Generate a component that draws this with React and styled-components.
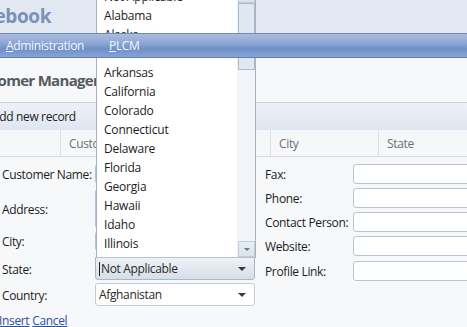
import React from 'react';
import styled, { createGlobalStyle } from 'styled-components';

const Global = createGlobalStyle`
  html, body { margin: 0; padding: 0; }
  body {
    background: #f7f8fa;
    font-family: "Open Sans", "Noto Sans", sans-serif;
    font-size: 12px;
    letter-spacing: -0.35px;
    color: #1c1c1c;
    overflow: hidden;
  }
`;

const Viewport = styled.div`
  width: 467px;
  height: 327px;
  overflow: hidden;
  background: #f7f8fa;
`;

const Header = styled.header`
  height: 33px;
  background: #e1e8f2;
  display: flex;
  align-items: center;
`;

const Brand = styled.h1`
  margin: 0;
  font-size: 19px;
  font-weight: 700;
  letter-spacing: -0.4px;
  color: #7b92b8;
  white-space: nowrap;
  line-height: 1;
  text-indent: -36px;
  padding-bottom: 1px;
`;

const MenuBar = styled.nav`
  position: relative;
  z-index: 10;
  height: 25px;
  box-sizing: border-box;
  border-top: 1px solid #7289b2;
  border-bottom: 1px solid #6581b2;
  background: linear-gradient(#a9bcdf 0%, #93aad6 35%, #7190c6 65%, #86a4d8 100%);
  display: flex;
  align-items: center;
  gap: 25px;
  padding-left: 6px;
`;

const MenuItem = styled.span`
  color: #f3f6fc;
  font-size: 12px;
  u { text-decoration: underline; }
`;

const PageTitle = styled.h2`
  margin: 0;
  height: 44px;
  display: flex;
  align-items: center;
  font-size: 15px;
  font-weight: 700;
  letter-spacing: -0.7px;
  color: #555a60;
  white-space: nowrap;
  text-indent: -33px;
`;

const Toolbar = styled.div`
  height: 28px;
  box-sizing: border-box;
  border-top: 1px solid #c7d2e0;
  background: linear-gradient(#edf1f7, #dfe6f0);
  display: flex;
  align-items: center;
  white-space: nowrap;
  text-indent: -8px;
  color: #222;
`;

const HeaderRow = styled.div`
  height: 27px;
  box-sizing: border-box;
  background: #f6f7f9;
  border-bottom: 1px solid #d3d9e2;
  display: grid;
  grid-template-columns: 60px 210px 108px 1fr;
`;

const HeaderCell = styled.div`
  display: flex;
  align-items: center;
  padding-left: ${p => (p.$first ? 0 : 8)}px;
  border-left: ${p => (p.$first ? 'none' : '1px solid #dde2e9')};
  color: #6d6f73;
  white-space: nowrap;
  overflow: hidden;
`;

const Form = styled.div`
  display: grid;
  grid-template-columns: 265px 1fr;
  padding-top: 7px;
`;

const Column = styled.div`
  display: flex;
  flex-direction: column;
`;

const Field = styled.div`
  position: relative;
  display: grid;
  grid-template-columns: ${p => p.$label}px 160px;
  align-items: center;
  height: ${p => p.$h}px;
  margin-bottom: ${p => p.$gap}px;
  padding-left: ${p => p.$pad || 0}px;
`;

const Label = styled.label`
  white-space: nowrap;
  color: #1c1c1c;
  padding-top: 1px;
`;

const Input = styled.div`
  height: ${p => p.$h || 20}px;
  box-sizing: border-box;
  border: 1px solid #b7c4d3;
  border-radius: 3px;
  background: #fff;
  width: ${p => p.$w || 160}px;
`;

const Select = styled.div`
  position: relative;
  height: ${p => p.$h}px;
  box-sizing: border-box;
  width: 160px;
  border: 1px solid ${p => (p.$active ? '#a9b7c8' : '#c0ccda')};
  border-radius: ${p => (p.$active ? '0 0 3px 3px' : '3px')};
  background: ${p => (p.$active ? 'linear-gradient(#eef2f6, #d6dee8)' : '#fff')};
  display: flex;
  align-items: center;
  padding-left: 3px;
  color: #2a2a2a;
`;

const Caret = styled.span`
  display: inline-block;
  width: 1px;
  height: 14px;
  background: #222;
  margin-right: 1px;
`;

const Arrow = styled.span`
  position: absolute;
  right: 8px;
  top: 50%;
  margin-top: -2px;
  width: 0;
  height: 0;
  border-left: 4px solid transparent;
  border-right: 4px solid transparent;
  border-top: 4px solid #333a44;
`;

const ListBox = styled.div`
  position: absolute;
  left: 0;
  bottom: 100%;
  width: 160px;
  height: 272px;
  box-sizing: border-box;
  border: 1px solid #a6b2c1;
  border-bottom-color: #b9c3cf;
  background: #fff;
  display: flex;
  z-index: 5;
`;

const Items = styled.ul`
  list-style: none;
  margin: 0;
  padding: 0 0 0 7px;
  flex: 1;
  overflow: hidden;
`;

const Item = styled.li`
  height: 19px;
  line-height: 19px;
  white-space: nowrap;
  letter-spacing: -0.2px;
  color: #1c1c1c;
`;

const ScrollBar = styled.div`
  width: 17px;
  background: #f3f5f8;
  display: flex;
  flex-direction: column;
  border-left: 1px solid #eef1f5;
`;

const ScrollButton = styled.div`
  height: 16px;
  box-sizing: border-box;
  border: 1px solid #c2ccd8;
  background: linear-gradient(#e9eef4, #dce3ec);
  display: flex;
  align-items: center;
  justify-content: center;
  &::after {
    content: '';
    border-left: 3.5px solid transparent;
    border-right: 3.5px solid transparent;
    ${p => (p.$up ? 'border-bottom' : 'border-top')}: 3.5px solid #6c7888;
  }
`;

const Thumb = styled.div`
  height: 67px;
  box-sizing: border-box;
  border: 1px solid #adbacb;
  background: #dfe7f1;
`;

const Spacer = styled.div`
  flex: 1;
`;

const Links = styled.div`
  margin-top: 6px;
  display: flex;
  gap: 4px;
  text-indent: -1px;
`;

const Link = styled.a`
  color: #2c4f9e;
  text-decoration: underline;
  cursor: pointer;
`;

const states = [
  'Not Applicable', 'Alabama', 'Alaska', 'Arizona', 'Arkansas', 'California',
  'Colorado', 'Connecticut', 'Delaware', 'Florida', 'Georgia', 'Hawaii',
  'Idaho', 'Illinois', 'Indiana', 'Iowa',
];

export default function App() {
  return (
    <Viewport>
      <Global />
      <Header>
        <Brand>Facebook</Brand>
      </Header>
      <MenuBar>
        <MenuItem><u>A</u>dministration</MenuItem>
        <MenuItem><u>P</u>LCM</MenuItem>
      </MenuBar>
      <PageTitle>Customer Management</PageTitle>
      <Toolbar>Add new record</Toolbar>
      <HeaderRow>
        <HeaderCell $first />
        <HeaderCell>Customer Name</HeaderCell>
        <HeaderCell>City</HeaderCell>
        <HeaderCell>State</HeaderCell>
      </HeaderRow>
      <Form>
        <Column>
          <Field $label={93} $h={20} $gap={5} $pad={2}>
            <Label>Customer Name:</Label>
            <Input />
          </Field>
          <Field $label={93} $h={40} $gap={2} $pad={2}>
            <Label>Address:</Label>
            <Input $h={40} />
          </Field>
          <Field $label={93} $h={20} $gap={6} $pad={2}>
            <Label>City:</Label>
            <Input />
          </Field>
          <Field $label={93} $h={23} $gap={3} $pad={2}>
            <Label>State:</Label>
            <Select $h={23} $active>
              <ListBox>
                <Items>
                  {states.map(s => <Item key={s}>{s}</Item>)}
                </Items>
                <ScrollBar>
                  <ScrollButton $up />
                  <Thumb />
                  <Spacer />
                  <ScrollButton />
                </ScrollBar>
              </ListBox>
              <Caret />Not Applicable
              <Arrow />
            </Select>
          </Field>
          <Field $label={93} $h={23} $gap={0} $pad={2}>
            <Label>Country:</Label>
            <Select $h={23}>
              Afghanistan
              <Arrow />
            </Select>
          </Field>
          <Links>
            <Link>Insert</Link>
            <Link>Cancel</Link>
          </Links>
        </Column>
        <Column>
          <Field $label={88} $h={20} $gap={4}>
            <Label>Fax:</Label>
            <Input $w={140} />
          </Field>
          <Field $label={88} $h={20} $gap={4}>
            <Label>Phone:</Label>
            <Input $w={140} />
          </Field>
          <Field $label={88} $h={20} $gap={4}>
            <Label>Contact Person:</Label>
            <Input $w={140} />
          </Field>
          <Field $label={88} $h={20} $gap={5}>
            <Label>Website:</Label>
            <Input $w={140} />
          </Field>
          <Field $label={88} $h={20} $gap={4}>
            <Label>Profile Link:</Label>
            <Input $w={140} />
          </Field>
        </Column>
      </Form>
    </Viewport>
  );
}
